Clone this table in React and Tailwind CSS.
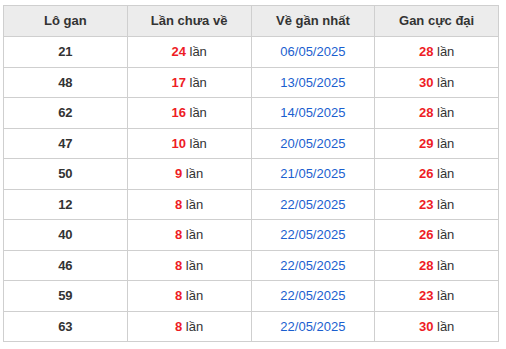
import React from 'react';

const rows = [
  ['21', 24, '06/05/2025', 28],
  ['48', 17, '13/05/2025', 30],
  ['62', 16, '14/05/2025', 28],
  ['47', 10, '20/05/2025', 29],
  ['50', 9, '21/05/2025', 26],
  ['12', 8, '22/05/2025', 23],
  ['40', 8, '22/05/2025', 26],
  ['46', 8, '22/05/2025', 28],
  ['59', 8, '22/05/2025', 23],
  ['63', 8, '22/05/2025', 30],
];

const App = () => {
  return (
    <div className="bg-white w-[506px] h-[349px] pl-[3px] pt-[5px]" style={{ fontFamily: '"Liberation Sans", Arial, sans-serif' }}>
      <table className="w-[496px] border-collapse table-fixed text-[13px] text-[#333]">
        <thead>
          <tr className="bg-[#ececec] h-[31px]">
            <th className="border border-[#cfcfcf] font-bold">Lô gan</th>
            <th className="border border-[#cfcfcf] font-bold">Lần chưa về</th>
            <th className="border border-[#cfcfcf] font-bold">Về gần nhất</th>
            <th className="border border-[#cfcfcf] font-bold">Gan cực đại</th>
          </tr>
        </thead>
        <tbody>
          {rows.map(([num, miss, date, max]) => (
            <tr key={num} className="h-[30.5px] text-center">
              <td className="border border-[#cfcfcf] font-bold">{num}</td>
              <td className="border border-[#cfcfcf]">
                <span className="font-bold text-[#ee1c25]">{miss}</span> lần
              </td>
              <td className="border border-[#cfcfcf] text-[#1b5fcf]">{date}</td>
              <td className="border border-[#cfcfcf]">
                <span className="font-bold text-[#ee1c25]">{max}</span> lần
              </td>
            </tr>
          ))}
        </tbody>
      </table>
    </div>
  );
};

export default App;
